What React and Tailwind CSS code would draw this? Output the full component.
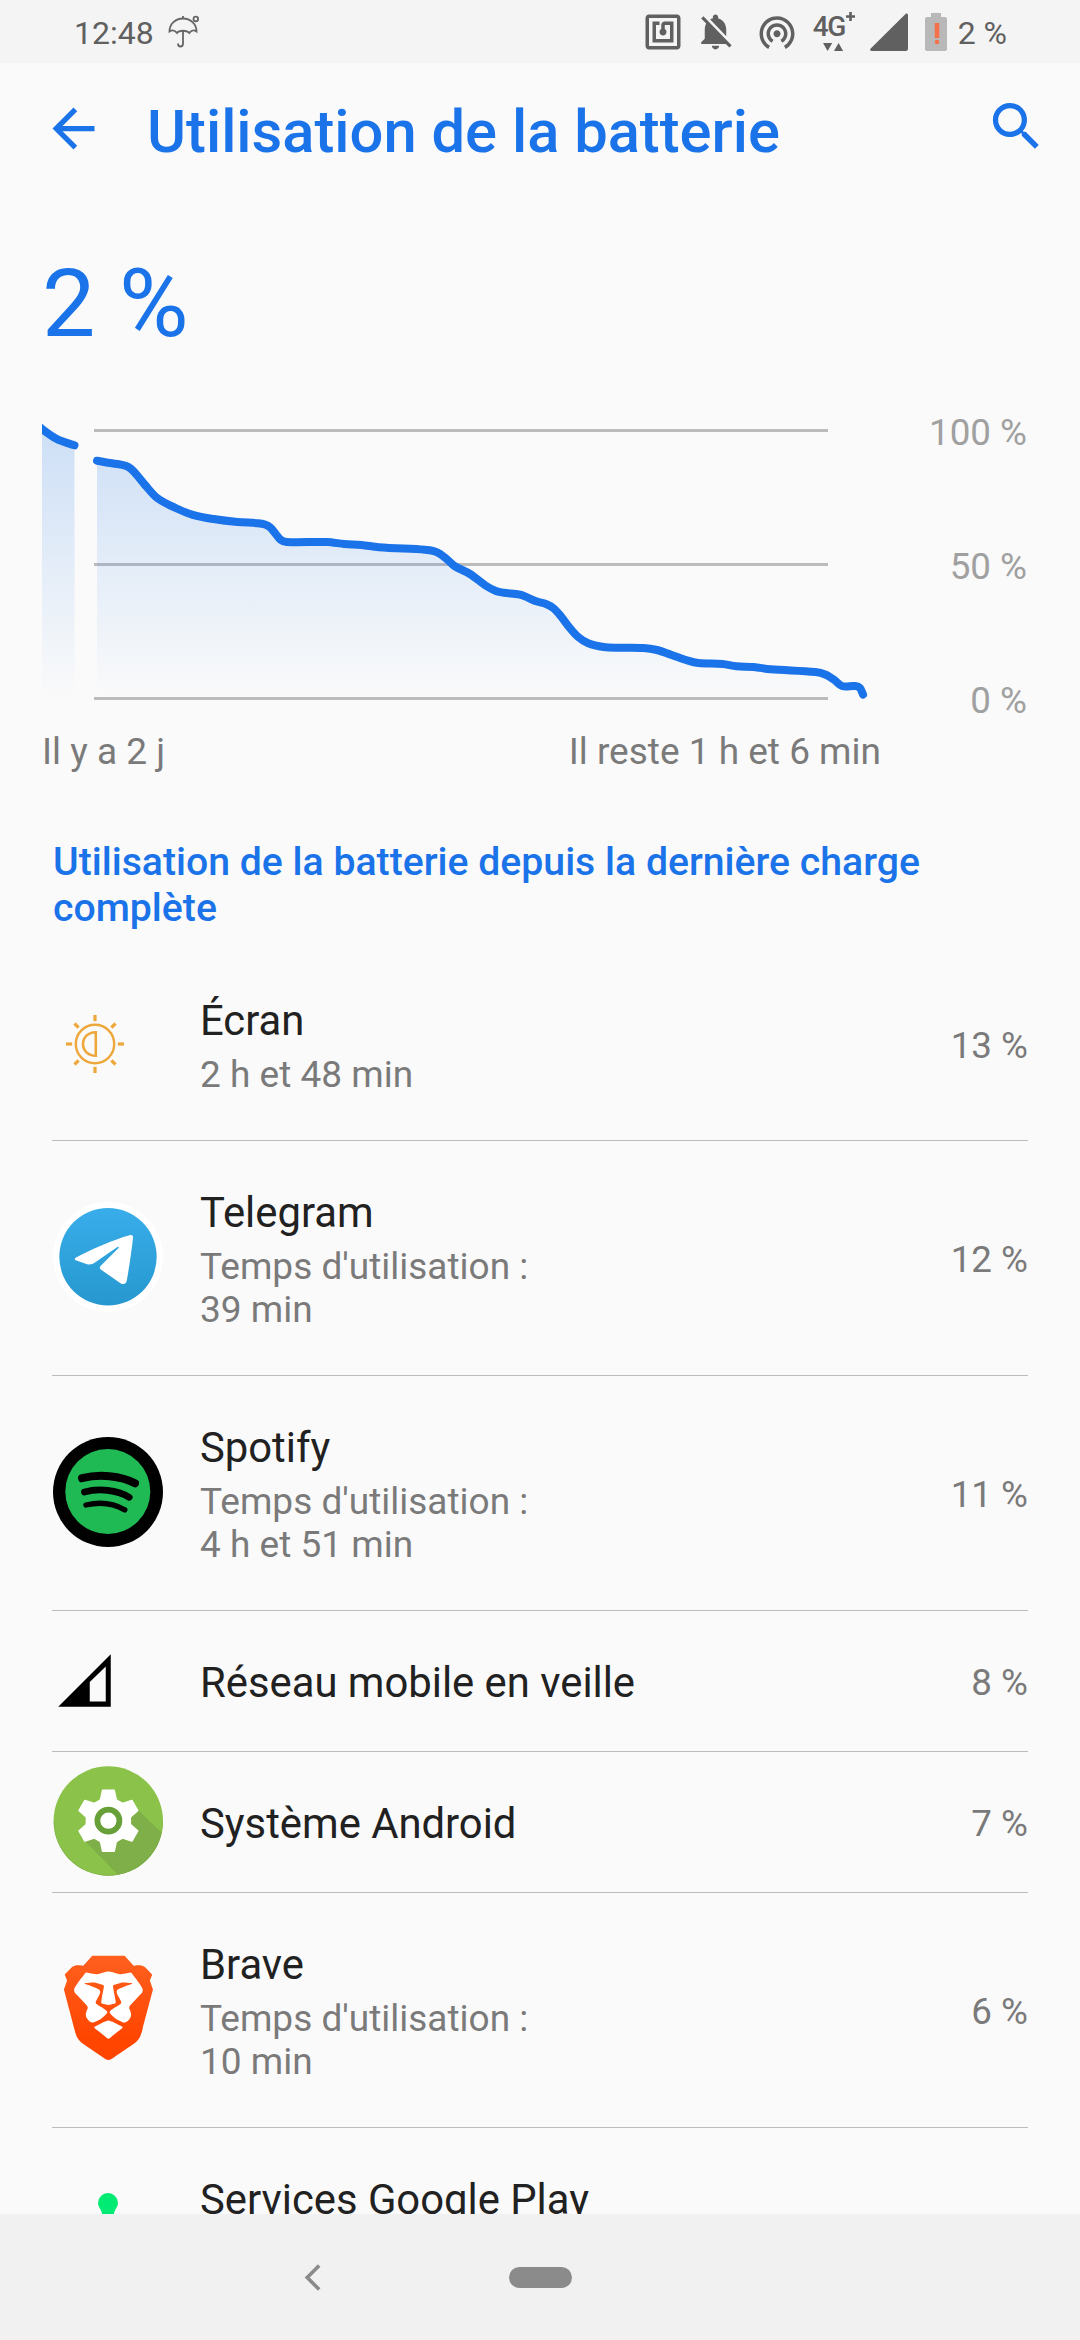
import { SiBrave } from 'react-icons/si';

const BLUE = '#1a73e8';

// Battery level samples, in chart pixels
const BEFORE_GAP = [[36, 424], [42, 429], [55, 438], [65, 442.3], [74.5, 445.3]];

const AFTER_GAP = [
  [97, 460.7], [110, 463], [122, 464.8], [128, 466.8], [134, 471.8], [144.6, 484.5], [156.7, 497.6], [175.6, 508],
  [192.8, 514.8], [213.5, 519], [237.6, 522], [258, 523.2], [265, 524.5], [270.3, 527.5], [275.5, 533.7],
  [280.6, 539.8], [286.5, 542], [327, 542], [344.4, 544], [361.6, 545], [378.8, 547.2], [425, 549.7],
  [433, 550.8], [440, 553.8], [447.7, 560], [454.5, 566], [470, 574], [485.5, 585.5], [495.9, 591], [504, 592.8],
  [520, 594.7], [537, 601.6], [546, 604], [553.8, 608.5], [560.7, 616], [569.3, 627.3], [577.9, 636.7],
  [588.2, 643.3], [603.7, 647], [619, 647.7], [643.3, 648], [657, 650], [671, 654.7], [688, 660.7],
  [698.4, 663], [722.5, 664], [736.3, 666.3], [753.5, 667], [770.7, 669.3], [815.5, 672],
  [825.8, 674.7], [834.4, 680], [842, 686], [855, 686], [860, 688], [863, 694.5],
];

const APPS = [
  { name: 'Écran',                   usage: ['2 h et 48 min'],                         percent: '13 %', Icon: ScreenIcon },
  { name: 'Telegram',                usage: ["Temps d'utilisation :", '39 min'],       percent: '12 %', Icon: TelegramIcon },
  { name: 'Spotify',                 usage: ["Temps d'utilisation :", '4 h et 51 min'], percent: '11 %', Icon: SpotifyIcon },
  { name: 'Réseau mobile en veille', usage: [],                                        percent: '8 %',  Icon: CellIcon },
  { name: 'Système Android',         usage: [],                                        percent: '7 %',  Icon: AndroidIcon },
  { name: 'Brave',                   usage: ["Temps d'utilisation :", '10 min'],       percent: '6 %',  Icon: BraveIcon },
  { name: 'Services Google Play',    usage: [],                                        tall: true,      Icon: PlayServicesIcon },
];

function smooth(points) {
  let d = `M${points[0][0]} ${points[0][1]}`;
  for (let i = 0; i < points.length - 1; i++) {
    const p0 = points[i - 1] || points[i];
    const p1 = points[i];
    const p2 = points[i + 1];
    const p3 = points[i + 2] || p2;
    // tangents are limited to the segment's length so the flat parts don't overshoot
    const len = p2[0] - p1[0];
    const t1 = len / 3 / (p2[0] - p0[0] || 1);
    const t2 = len / 3 / (p3[0] - p1[0] || 1);
    d += ` C${p1[0] + (p2[0] - p0[0]) * t1} ${p1[1] + (p2[1] - p0[1]) * t1}`;
    d += ` ${p2[0] - (p3[0] - p1[0]) * t2} ${p2[1] - (p3[1] - p1[1]) * t2}`;
    d += ` ${p2[0]} ${p2[1]}`;
  }
  return d;
}

function area(points) {
  return `${smooth(points)} V698 H${points[0][0]} Z`;
}

function ScreenIcon() {
  return (
    <svg className="size-[84px]" viewBox="-42 -42 84 84" fill="none" stroke="#eda73a">
      <circle r="19.2" strokeWidth="2.4" />
      <path d="M0.8 -11.8 V11.8 C-7 11.8 -12 6.5 -12 0 S-7 -11.8 0.8 -11.8Z" strokeWidth="2.6" />
      {[0, 45, 90, 135, 180, 225, 270, 315].map(a => (
        <path key={a} d={a % 90 ? 'M0 -23.2 V-29' : 'M0 -22.8 V-29'} strokeWidth="3.2" transform={`rotate(${a})`} />
      ))}
    </svg>
  );
}

function TelegramIcon() {
  return (
    <svg className="size-[110px]" viewBox="0 0 110 110">
      <defs>
        <linearGradient id="telegram" x1="0" y1="0" x2="0" y2="1">
          <stop offset="0" stopColor="#38adea" />
          <stop offset="1" stopColor="#2798cf" />
        </linearGradient>
      </defs>
      <circle cx="55" cy="55" r="55" fill="#fff" />
      <circle cx="55" cy="54.8" r="48.7" fill="url(#telegram)" />
      <path
        d="M23 55.5 C38 47.5 61 37.5 76.5 33.2 C79 32.5 80.3 33.6 80 36 C78.5 50 76 66 73.8 78.5 C73.2 82 70.5 83 67.5 81.2 L48.5 68 C46.3 66.3 46.3 65.3 48 63.4 L65.3 46.3 C66.5 44.7 65.5 44.4 64 45.3 L42 60.6 C39.5 62.4 37 63 34 62.2 L23.5 58.6 C21.5 57.8 21.3 56.5 23 55.5Z"
        fill="#fff"
      />
    </svg>
  );
}

function SpotifyIcon() {
  return (
    <svg className="size-[110px]" viewBox="0 0 110 110" fill="none" stroke="#000" strokeLinecap="round">
      <circle cx="55" cy="55" r="55" fill="#000" stroke="none" />
      <circle cx="54.8" cy="54.5" r="42.5" fill="#1fba54" stroke="none" />
      <path d="M29 41.2 C46 36.8 68 38.5 82 46.3" strokeWidth="8" />
      <path d="M31.5 55 C46 51 64 53 76.2 60.3" strokeWidth="6.8" />
      <path d="M33 68 C46 64.8 60 66 71.8 72.8" strokeWidth="5.4" />
    </svg>
  );
}

function CellIcon() {
  return (
    <svg className="size-[63px]" viewBox="0 0 24 24">
      <path d="M2 22H22V2ZM14 20V12.6L20.1 6.7V20Z" fillRule="evenodd" />
    </svg>
  );
}

function AndroidIcon() {
  return (
    <svg className="size-[110px]" viewBox="0 0 110 110">
      <clipPath id="disc">
        <circle cx="55.3" cy="55" r="54.7" />
      </clipPath>
      <circle cx="55.3" cy="55" r="54.7" fill="#8bc34a" />
      <g clipPath="url(#disc)">
        <path d="M28 71 L68 112 H112 V70 L84 43 L55 55Z" fill="#7eaf48" />
        <path d="M0.6 55 A54.7 54.7 0 0 0 110 55" fill="none" stroke="#6f9c3e" strokeWidth="1.2" opacity="0.6" />
      </g>
      <g transform="translate(55.4 54.7)">
        <circle r="22.8" fill="#fff" />
        {[0, 60, 120, 180, 240, 300].map(a => (
          <path
            key={a}
            d="M-5.6 -30.3 H5.6 L7.6 -21 L12 -17 H-12 L-7.6 -21Z"
            fill="#fff"
            stroke="#fff"
            strokeWidth="2"
            strokeLinejoin="round"
            transform={`rotate(${a})`}
          />
        ))}
        <circle r="11" fill="none" stroke="#679f38" strokeWidth="5.8" />
      </g>
    </svg>
  );
}

function BraveIcon() {
  return (
    <svg className="size-[110px]" viewBox="0 0 110 110">
      <defs>
        <linearGradient id="brave" x1="0" y1="0" x2="0" y2="1">
          <stop offset="0" stopColor="#ff601f" />
          <stop offset="0.8" stopColor="#ff4500" />
        </linearGradient>
      </defs>
      <path d="M22 15 H88 L92 40 L80 80 L55 96 L30 80 L18 40Z" fill="#fff" />
      <SiBrave x="3.2" y="1.5" size={104.5} fill="url(#brave)" />
    </svg>
  );
}

function PlayServicesIcon() {
  return (
    <svg className="size-[110px]" viewBox="0 0 110 110">
      <path d="M55 4 A10 10 0 0 1 65 14 C65 18 61.5 20 61 25 V50 H49 V25 C48.5 20 45 18 45 14 A10 10 0 0 1 55 4Z" fill="#00ea74" />
    </svg>
  );
}

function StatusBar() {
  return (
    <div className="flex h-[63px] shrink-0 items-center bg-[#f4f4f4] pl-[74px] pr-[73px] text-[32px] leading-[40px] text-[#606060]">
      <span className="pt-[3px]">12:48</span>
      {/* Umbrella */}
      <svg className="ml-[13px] h-[36px] w-[34px]" viewBox="167 14 34 36" fill="none" stroke="#666" strokeWidth="1.8">
        <path d="M169.5 31.5 C169.5 24 175.5 18.5 183 18.5 S196.5 24 196.5 31.5 C194 29.8 191.5 30 189.3 33 C187 30 179 30 177 33 C174.5 30 172 29.8 169.5 31.5Z" />
        <path d="M183 16 V18.5 M183 31 V43.5 C183 47.5 178 47.5 178 43.5" />
        <circle cx="195.8" cy="19" r="2.3" />
      </svg>
      <div className="flex-1" />
      {/* NFC */}
      <svg className="size-[42px]" viewBox="0 0 24 24" fill="#606060">
        <path d="M20 2H4c-1.1 0-2 .9-2 2v16c0 1.1.9 2 2 2h16c1.1 0 2-.9 2-2V4c0-1.1-.9-2-2-2zm0 18H4V4h16v16zM18 6h-5c-1.1 0-2 .9-2 2v2.28c-.6.35-1 .98-1 1.72 0 1.1.9 2 2 2s2-.9 2-2c0-.74-.4-1.38-1-1.72V8h3v8H8V8h2V6H6v12h12V6z" />
      </svg>
      {/* Notifications off */}
      <svg className="ml-[10px] size-[43px]" viewBox="0 0 24 24" fill="#606060">
        <path d="M20 18.69L7.84 6.14 5.27 3.49 4 4.76l2.8 2.8v.01c-.52.99-.8 2.16-.8 3.42v5l-2 2v1h13.73l2 2L21 19.72l-1-1.03zM12 22c1.11 0 2-.89 2-2h-4c0 1.11.89 2 2 2zm6-7.32V11c0-3.08-1.64-5.64-4.5-6.32V4c0-.83-.67-1.5-1.5-1.5s-1.5.67-1.5 1.5v.68c-.15.03-.29.08-.42.12-.1.03-.2.07-.3.11h-.01c-.01 0-.01 0-.02.01-.23.09-.46.2-.68.31 0 0-.01 0-.01.01L18 14.68z" />
      </svg>
      {/* Hotspot */}
      <svg className="ml-[19px] size-[42px]" viewBox="0 0 24 24" fill="#606060">
        <path d="M12 11c-1.1 0-2 .9-2 2s.9 2 2 2 2-.9 2-2-.9-2-2-2zm6 2c0-3.31-2.69-6-6-6s-6 2.69-6 6c0 2.22 1.21 4.15 3 5.19l1-1.74c-1.19-.7-2-1.97-2-3.45 0-2.21 1.79-4 4-4s4 1.79 4 4c0 1.48-.81 2.75-2 3.45l1 1.74c1.79-1.04 3-2.97 3-5.19zM12 3C6.48 3 2 7.48 2 13c0 3.7 2.01 6.92 4.99 8.65l1-1.73C5.61 18.53 4 15.96 4 13c0-4.42 3.58-8 8-8s8 3.58 8 8c0 2.96-1.61 5.53-4 6.92l1 1.73c2.99-1.73 5-4.95 5-8.65 0-5.52-4.48-10-10-10z" />
      </svg>
      {/* Network type, with data activity below */}
      <div className="ml-[15px] flex h-[42px] w-[43px] flex-col">
        <div className="flex h-[31px] items-start">
          <span className="w-[33px] text-[28px] leading-[32px] font-medium tracking-[-1.2px]">4G</span>
          <svg className="mt-[1px] size-[9px] shrink-0" viewBox="0 0 9 9" stroke="#606060" strokeWidth="2.6">
            <path d="M4.5 0V9M0 4.5H9" />
          </svg>
        </div>
        <svg className="ml-[10px] h-[9px] w-[20px]" viewBox="0 0 20 9" fill="#606060">
          <path d="M0 1H9.2L4.6 9ZM11 9H20.2L15.6 1Z" />
        </svg>
      </div>
      <svg className="ml-[14px] size-[38px]" viewBox="0 0 38 38" fill="#606060">
        <path d="M36 0.6 Q38 0 38 2 V35.5 Q38 38 35.5 38 H1.5 Q-0.8 37.5 0.7 35.5Z" />
      </svg>
      {/* Low battery */}
      <svg className="ml-[17px] h-[38px] w-[22px]" viewBox="0 0 22 38">
        <path d="M6 0H16V4H20Q22 4 22 6V36Q22 38 20 38H2Q0 38 0 36V6Q0 4 2 4H6Z" fill="#b8b8b8" />
        <path d="M9.7 10H14.3V25H9.7Z" fill="#f4714a" />
        <circle cx="12" cy="29" r="2.3" fill="#f4714a" />
      </svg>
      <span className="pt-[3px] pl-[11px] whitespace-nowrap">2 %</span>
    </div>
  );
}

function Header() {
  return (
    <header className="flex h-[131px] items-center pl-[42px] pr-[32px] text-[#1a73e8]">
      <svg className="size-[63px]" viewBox="0 0 24 24" fill="currentColor">
        <path d="M20 11H7.83l5.59-5.59L12 4l-8 8 8 8 1.41-1.41L7.83 13H20v-2z" />
      </svg>
      <h1 className="ml-[42px] flex-1 pt-[6px] text-[59.7px] leading-[72px] font-medium whitespace-nowrap">Utilisation de la batterie</h1>
      <svg className="mb-[4px] size-[63px]" viewBox="0 0 24 24" fill="currentColor">
        <path d="M15.5 14h-.79l-.28-.27C15.41 12.59 16 11.11 16 9.5 16 5.91 13.09 3 9.5 3S3 5.91 3 9.5 5.91 16 9.5 16c1.61 0 3.09-.59 4.23-1.57l.27.28v.79l5 4.99L20.49 19l-4.99-5zm-6 0C7.01 14 5 11.99 5 9.5S7.01 5 9.5 5 14 7.01 14 9.5 11.99 14 9.5 14z" />
      </svg>
    </header>
  );
}

function BatteryChart() {
  return (
    <section className="pt-[62px] pl-[42px] pr-[53px]">
      <p className="text-[95px] leading-[96px] text-[#1a73e8]">2 %</p>
      <div className="mt-[58px] flex h-[312px] justify-between">
        <svg className="h-[312px] w-[840px]" viewBox="42 410 840 312" fill="none">
          <defs>
            <linearGradient id="fade" gradientUnits="userSpaceOnUse" x1="0" y1="430" x2="0" y2="698">
              <stop offset="0" stopColor={BLUE} stopOpacity="0.2" />
              <stop offset="1" stopColor={BLUE} stopOpacity="0" />
            </linearGradient>
          </defs>
          <path d="M94 430.5H828M94 564.5H828M94 698.5H828" stroke="#bcbcbc" strokeWidth="3" />
          <path d={area(BEFORE_GAP)} fill="url(#fade)" />
          <path d={area(AFTER_GAP)} fill="url(#fade)" />
          <path d={smooth(BEFORE_GAP)} stroke={BLUE} strokeWidth="8" strokeLinecap="round" />
          <path d={smooth(AFTER_GAP)} stroke={BLUE} strokeWidth="8" strokeLinecap="round" strokeLinejoin="round" />
        </svg>
        <div className="mt-[1px] -mb-[1px] flex flex-col justify-between text-right text-[36.75px] leading-[44px] whitespace-nowrap text-[#a0a0a0]">
          <span>100 %</span>
          <span>50 %</span>
          <span>0 %</span>
        </div>
      </div>
      <div className="mt-[8px] flex w-[839px] justify-between text-[37px] leading-[44px] text-[#7a7a7a]">
        <span>Il y a 2 j</span>
        <span>Il reste 1 h et 6 min</span>
      </div>
    </section>
  );
}

function AppRow({ app }) {
  const { name, usage, percent, tall, Icon } = app;
  return (
    <li className={`flex items-center border-b border-[#bcbcbc] ${tall ? 'min-h-[235px]' : ''}`}>
      <div className="w-[148px] shrink-0 pb-[2px] pl-[1px]">
        <Icon />
      </div>
      <div className="flex-1 self-start pt-[47px] pb-[44px]">
        <h3 className="text-[41.8px] leading-[49px] whitespace-nowrap text-[#212121]">{name}</h3>
        {usage.length > 0 && (
          <p className="mt-2 text-[37px] leading-[43px] text-[#7a7a7a]">
            {usage.map(line => <span key={line} className="block">{line}</span>)}
          </p>
        )}
      </div>
      {percent && <span className="pt-[3px] text-[36.75px] leading-[44px] text-[#7a7a7a]">{percent}</span>}
    </li>
  );
}

function NavBar() {
  return (
    <nav className="flex h-[126px] shrink-0 items-center bg-[#f1f1f1] pl-[304px]">
      <svg className="h-[27px] w-[17px]" viewBox="0 0 17 27" fill="none" stroke="#8b8b8b" strokeWidth="3.6">
        <path d="M15.2 1.5L3.2 13.5L15.2 25.5" />
      </svg>
      <div className="ml-[188px] h-[21px] w-[63px] rounded-full bg-[#8b8b8b]" />
    </nav>
  );
}

export default function App() {
  return (
    <div className="flex h-[2340px] w-[1080px] flex-col overflow-hidden bg-[#fafafa] font-['Roboto',sans-serif]">
      <StatusBar />
      <main className="h-[2151px] overflow-hidden">
        <Header />
        <BatteryChart />
        <h2 className="mt-[65px] pl-[53px] pr-[100px] text-[39.2px] leading-[46px] font-medium text-[#1a73e8]">
          Utilisation de la batterie depuis la dernière charge complète
        </h2>
        <ul className="mt-[18px] ml-[52px] mr-[52px]">
          {APPS.map(app => <AppRow key={app.name} app={app} />)}
        </ul>
      </main>
      <NavBar />
    </div>
  );
}
